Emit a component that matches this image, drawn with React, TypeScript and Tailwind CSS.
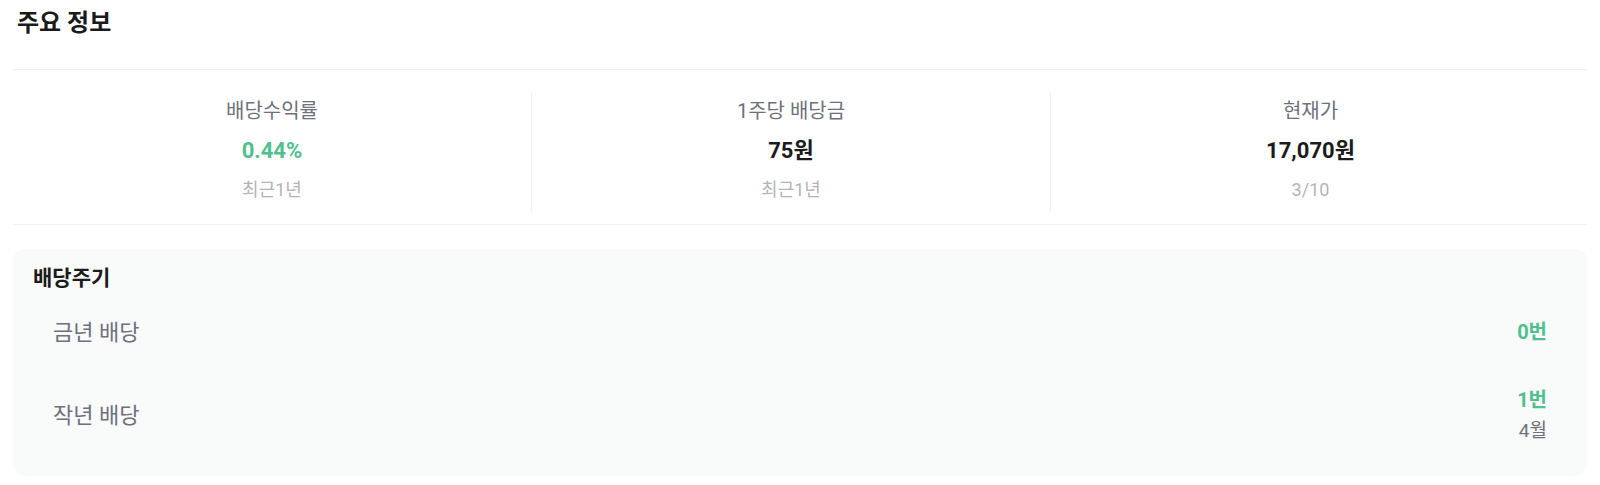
const font = { fontFamily: "Roboto, 'Noto Sans CJK KR', sans-serif" };

type Stat = { label: string; value: string; sub: string; green?: boolean };

const stats: Stat[] = [
  { label: '배당수익률', value: '0.44%', sub: '최근1년', green: true },
  { label: '1주당 배당금', value: '75원', sub: '최근1년' },
  { label: '현재가', value: '17,070원', sub: '3/10' },
];

function StatCol({ stat, last }: { stat: Stat; last?: boolean }) {
  return (
    <div className={`flex flex-col items-center pt-[5px] pb-[10px] ${last ? '' : 'border-r border-[#efefef]'}`}>
      <div className="text-[20px] leading-[26px] text-[#6e717c]">{stat.label}</div>
      <div
        className={`mt-[12px] text-[22px] leading-[30px] font-bold ${stat.green ? 'text-[#4fc08e]' : 'text-[#1b1b1b]'}`}
      >
        {stat.value}
      </div>
      <div className="mt-[12px] text-[18px] leading-[24px] text-[#b4b4b8]">{stat.sub}</div>
    </div>
  );
}

export default function App() {
  return (
    <div className="w-[1600px] bg-white px-[13px]" style={font}>
      <div className="pt-[7px] pb-[30px] pl-[4px]">
        <h2 className="text-[24px] leading-[32px] font-bold text-[#1b1b1b]">주요 정보</h2>
      </div>

      <div className="border-t border-b border-[#f0f0f0] pt-[23px] pb-[12px]">
        <div className="mr-[17px] grid grid-cols-3">
          {stats.map((s, i) => (
            <StatCol key={s.label} stat={s} last={i === stats.length - 1} />
          ))}
        </div>
      </div>

      <div className="mt-[24px] rounded-[12px] bg-[#f9fafa] px-[20px] pt-[16px] pb-[33px]">
        <h3 className="text-[21px] leading-[27px] font-bold text-[#1b1b1b]">배당주기</h3>

        <div className="mt-[12px] flex h-[56px] items-center justify-between px-[20px]">
          <span className="text-[22px] text-[#6e717c]">금년 배당</span>
          <span className="text-[20px] leading-[26px] font-bold text-[#4fc08e]">0번</span>
        </div>

        <div className="mt-[27px] flex h-[56px] items-center justify-between px-[20px]">
          <span className="text-[22px] text-[#6e717c]">작년 배당</span>
          <div className="flex flex-col items-end">
            <span className="text-[20px] leading-[26px] font-bold text-[#4fc08e]">1번</span>
            <span className="mt-[6px] text-[19px] leading-[24px] text-[#6e717c]">4월</span>
          </div>
        </div>
      </div>
    </div>
  );
}
